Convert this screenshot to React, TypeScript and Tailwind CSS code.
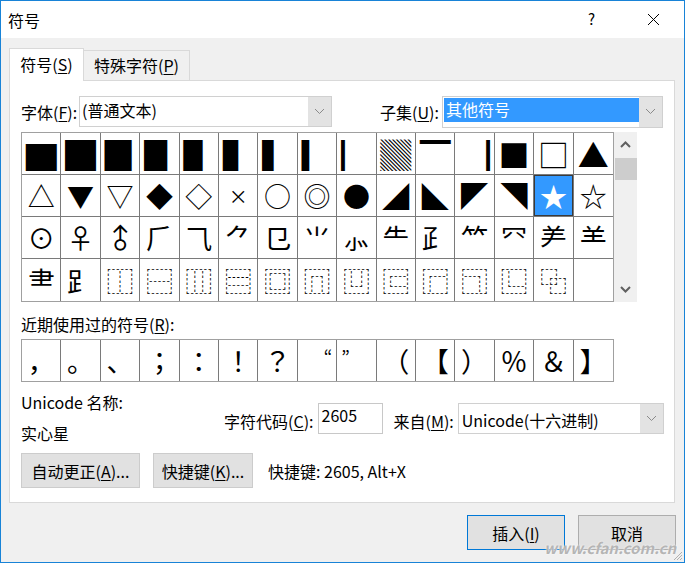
import React from 'react'

const ui = "font-['Noto_Sans_CJK_SC','Noto_Sans',sans-serif]"

const symbols: string[][] = [
  ['▇', '█', '▉', '▊', '▋', '▌', '▍', '▎', '▏', '▓', '▔', '▕', '■', '□', '▲'],
  ['△', '▼', '▽', '◆', '◇', '×', '○', '◎', '●', '◢', '◣', '◤', '◥', '★', '☆'],
  ['⊙', '♀', '♂', '⺁', '⺄', '⺈', '⺋', '⺌', '⺗', '⺧', '⺪', '⺮', '⺳', '⺶', '⺷'],
  ['⺻', '⻊', '⿰', '⿱', '⿲', '⿳', '⿴', '⿵', '⿶', '⿷', '⿸', '⿹', '⿺', '⿻', ''],
]

const recent = ['，', '。', '、', '；', '：', '！', '？', '“', '”', '（', '【', '）', '％', '＆', '】']

function Chevron() {
  return (
    <svg width="11" height="7" viewBox="0 0 11 7">
      <polyline points="1,1 5.5,5.5 10,1" fill="none" stroke="#8a8a8a" strokeWidth="1" />
    </svg>
  )
}

function ArrowBox() {
  return (
    <div className="flex w-[23px] items-center justify-center self-stretch bg-[#e3e3e3]">
      <Chevron />
    </div>
  )
}

function Button({ label, className }: { label: React.ReactNode; className: string }) {
  return (
    <div
      className={`flex h-[35px] items-center justify-center border bg-[#e1e1e1] text-[16px] text-black ${className}`}
    >
      {label}
    </div>
  )
}

function Key({ k }: { k: string }) {
  return <span className="underline underline-offset-2">{k}</span>
}

// per-cell tweaks so the glyphs sit like the Windows dialog
function glyph(s: string, r: number) {
  if (r === 0) return <span className="block h-[31px] text-[31px] leading-[31px]">{s}</span>
  if (s === '×') return <span className="text-[19px]">{s}</span>
  if (s === '♂') return <span className="inline-block -rotate-45">{s}</span>
  return s
}

export default function App() {
  return (
    <div className={`relative flex h-[563px] w-[685px] flex-col overflow-hidden border border-[#1883d7] bg-[#f0f0f0] ${ui}`}>
      {/* title bar */}
      <div className="flex h-[37px] items-center bg-white pl-[7px] text-[16px] text-black">
        <span>符号</span>
        <span className="ml-auto mr-[52px] text-[15px]">?</span>
        <svg width="13" height="13" viewBox="0 0 13 13" className="mr-[24px]">
          <path d="M1 1 L12 12 M12 1 L1 12" stroke="#000" strokeWidth="1" />
        </svg>
      </div>

      <div className="flex flex-col px-[8px] pt-[10px]">
        {/* tabs */}
        <div className="flex items-end text-[16px] text-black">
          <div className="relative z-10 flex h-[33px] w-[75px] items-center justify-center border-x border-t border-[#d9d9d9] bg-white pb-[2px]">
            <span>
              符号(<Key k="S" />)
            </span>
          </div>
          <div className="flex h-[31px] w-[106px] items-center justify-center border-r border-t border-[#d9d9d9] bg-[#f0f0f0] pb-[2px]">
            <span>
              特殊字符(<Key k="P" />)
            </span>
          </div>
        </div>

        {/* panel */}
        <div className="-mt-px flex h-[423px] w-[666px] flex-col border border-[#d9d9d9] bg-white pl-[11px] pt-[15px] text-[16px] text-black">
          <div className="flex h-[31px] items-center">
            <span className="w-[58px]">
              字体(<Key k="F" />):
            </span>
            <div className="flex h-[31px] w-[253px] border border-[#d0d0d0] bg-white">
              <span className="flex-1 pl-[2px] leading-[26px]">(普通文本)</span>
              <ArrowBox />
            </div>
            <span className="ml-[48px] w-[62px]">
              子集(<Key k="U" />):
            </span>
            <div className="flex h-[32px] w-[221px] border border-[#d0d0d0] bg-white">
              <div className="flex-1 pb-[4px] pl-px pt-px">
                <div className="h-[24px] bg-[#3399ff] pl-[2px] leading-[23px] text-white">其他符号</div>
              </div>
              <ArrowBox />
            </div>
          </div>

          {/* symbol grid */}
          <div className="mt-[5px] flex">
            <div className="grid h-[170px] w-[593px] grid-cols-15 grid-rows-4 border border-[#a0a0a0] font-['Noto_Sans_CJK_SC',sans-serif] text-[27px] leading-none">
              {symbols.map((row, r) =>
                row.map((s, c) => {
                  const sel = r === 1 && c === 13
                  return (
                    <div
                      key={`${r}-${c}`}
                      className={`flex items-center justify-center border-[#7a7a7a] ${c < 14 ? 'border-r' : ''} ${
                        r < 3 ? 'border-b' : ''
                      } ${sel ? 'bg-[#3399ff] text-white shadow-[inset_0_0_0_1px_#3a3a3a]' : 'text-black'}`}
                    >
                      {glyph(s, r)}
                    </div>
                  )
                })
              )}
            </div>
            <div className="relative h-[170px] w-[23px] bg-[#f0f0f0]">
              <svg width="11" height="7" viewBox="0 0 11 7" className="absolute left-[6px] top-[9px]">
                <polyline points="1,6 5.5,1.5 10,6" fill="none" stroke="#606060" strokeWidth="2" />
              </svg>
              <div className="absolute left-px top-[26px] h-[22px] w-[22px] bg-[#cdcdcd]" />
              <svg width="11" height="7" viewBox="0 0 11 7" className="absolute bottom-[9px] left-[6px]">
                <polyline points="1,1 5.5,5.5 10,1" fill="none" stroke="#606060" strokeWidth="2" />
              </svg>
            </div>
          </div>

          <div className="mt-[11px] h-[22px] leading-[22px]">
            近期使用过的符号(<Key k="R" />):
          </div>

          <div className="mt-[4px] grid h-[43px] w-[593px] grid-cols-15 border border-[#a0a0a0] font-['Noto_Sans_CJK_JP',sans-serif] text-[27px] leading-none">
            {recent.map((s, i) => (
              <div
                key={i}
                className={`flex items-center border-[#7a7a7a] ${i < 14 ? 'border-r' : ''} ${
                  s === '“' ? 'justify-end pr-[4px]' : s === '”' ? 'justify-start pl-[4px]' : 'justify-center'
                }`}
              >
                {s === '“' || s === '”' ? <span className="-mt-[10px] text-[18px]">{s}</span> : s}
              </div>
            ))}
          </div>

          {/* info */}
          <div className="mt-[9px] flex items-start">
            <div className="flex w-[203px] flex-col">
              <div className="h-[22px] leading-[22px]">Unicode 名称:</div>
              <div className="mt-[9px] h-[22px] leading-[22px]">实心星</div>
            </div>
            <div className="mt-[12px] flex h-[31px] items-center">
              <span className="pt-[4px]">
                字符代码(<Key k="C" />):
              </span>
              <div className="ml-[4px] h-[31px] w-[65px] border border-[#c8c8c8] bg-white pl-[3px] leading-[22px]">
                2605
              </div>
              <span className="ml-[11px] pt-[4px]">
                来自(<Key k="M" />):
              </span>
              <div className="ml-[4px] flex h-[31px] w-[206px] border border-[#d0d0d0] bg-white">
                <span className="flex-1 pl-[3px] pt-[3px] leading-[26px]">Unicode(十六进制)</span>
                <ArrowBox />
              </div>
            </div>
          </div>

          <div className="mt-[9px] flex items-center">
            <Button
              className="w-[119px] border-[#cccccc]"
              label={
                <span>
                  自动更正(<Key k="A" />)...
                </span>
              }
            />
            <Button
              className="ml-[13px] w-[100px] border-[#cccccc]"
              label={
                <span>
                  快捷键(<Key k="K" />)...
                </span>
              }
            />
            <span className="ml-[15px]">快捷键: 2605, Alt+X</span>
          </div>
        </div>

        {/* dialog buttons */}
        <div className="mt-[12px] flex justify-end gap-[13px]">
          <Button
            className="w-[98px] border-[#0078d7]"
            label={
              <span>
                插入(<Key k="I" />)
              </span>
            }
          />
          <Button className="w-[98px] border-[#adadad]" label="取消" />
        </div>
      </div>

      {/* watermark */}
      <div className="absolute left-[543px] top-[536px] text-[15px] font-bold italic text-[#b5b5b5] [text-shadow:0_0_2px_#ffffff]">
        www.cfan.com.cn
      </div>
      {/* size grip */}
      <svg width="12" height="12" viewBox="0 0 12 12" className="absolute bottom-[1px] right-[1px]">
        <path d="M11 3 L3 11 M11 6 L6 11 M11 9 L9 11" stroke="#b0b0b0" strokeWidth="1" />
      </svg>
    </div>
  )
}
